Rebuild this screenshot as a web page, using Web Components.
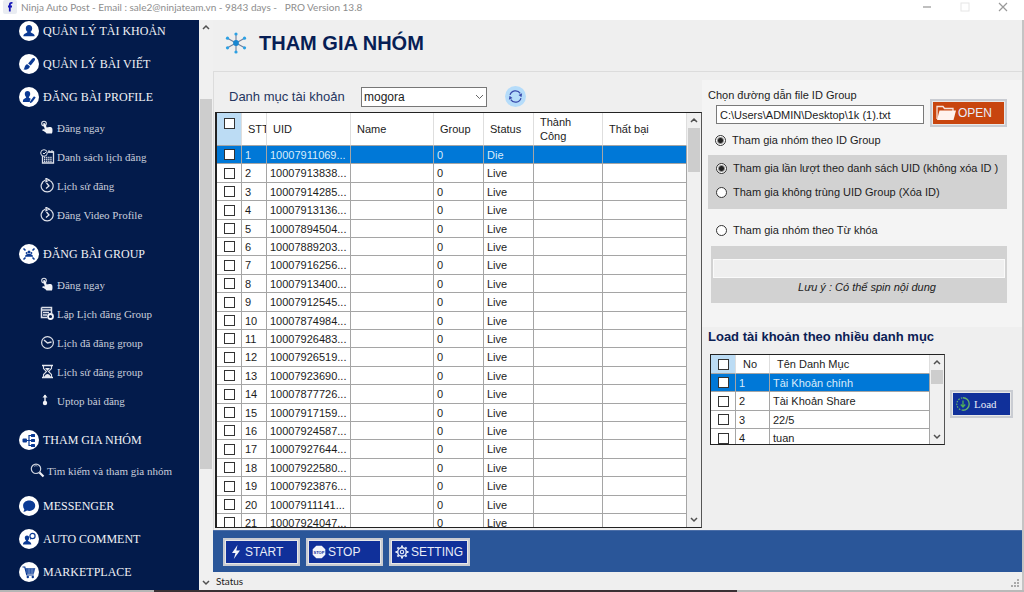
<!DOCTYPE html>
<html lang="vi">
<head>
<meta charset="utf-8">
<title>Ninja Auto Post</title>
<style>
html,body{height:100%;margin:0}
body{font:11px/14px "Liberation Sans",Arial,sans-serif;color:#1c1c1c;background:#efefef;overflow:hidden}
</style>
</head>
<body>
<ninja-app></ninja-app>
<script>
const ICONS = {
user:'<circle cx="10" cy="10" r="10" fill="#fff"/><path d="M10 4c-2 0-3.300 1.400-3.200 3.400.1 1.500.7 2.700 1.600 3.400-.1 1-1.200 1.300-2.600 1.900-1 .4-1.400 1.200-1.400 2.500h11.200c0-1.300-.4-2.100-1.400-2.500-1.400-.6-2.500-.9-2.600-1.900.9-.7 1.500-1.900 1.600-3.400C13.300 5.400 12 4 10 4z" fill="#0b3a94"/>',
brush:'<circle cx="10" cy="10" r="10" fill="#fff"/><path d="M15.500 4.200c.9.600.6 1.700 0 2.500l-3.800 4.800-2.600-2.100 4-4.600c.7-.8 1.600-1.200 2.400-.6z M8.300 10.200l2.600 2.100c-.4 2.600-3 3.900-6.400 3.300 1.500-1.200.7-4.800 3.800-5.400z" fill="#0b3a94"/>',
edit:'<circle cx="10" cy="10" r="10" fill="#fff"/><path d="M8.500 4C6.800 4 5.700 5.200 5.800 7c.1 1.400.6 2.400 1.400 3-.1 1-1 1.300-2 1.700-.9.400-1.300 1.200-1.300 3.300h7c-.3-1.300.2-2.400 1-3.300-1-.4-2-.7-2.100-1.700.8-.6 1.300-1.600 1.400-3C11.300 5.200 10.200 4 8.500 4z" fill="#0b3a94"/><path d="M15 9.200l1.700 1.300-3.600 4.800-2.300.9.500-2.300z" fill="#0b3a94"/>',
people:'<circle cx="10" cy="10" r="10" fill="#fff"/><g fill="#0b3a94"><circle cx="10" cy="8" r="1.500"/><circle cx="7.600" cy="9" r="1"/><circle cx="12.400" cy="9" r="1"/><path d="M6 12.800c0-2.600 2.500-2.800 4-2.800s4 .2 4 2.800z"/></g><path d="M4.500 4.500l2 2M15.500 4.500l-2 2M4.500 15.500l2-2M15.500 15.500l-2-2" stroke="#0b3a94" stroke-width="1.600"/>',
tree:'<circle cx="10" cy="10" r="10" fill="#fff"/><path d="M6 10.500h4m3-5h-3v10h3M10 10.500h3" stroke="#0b3a94" stroke-width="1.200" fill="none"/><g fill="#0b3a94"><rect x="3.500" y="8.500" width="4.500" height="4" rx="1"/><rect x="12" y="4" width="4" height="3" rx=".5"/><rect x="12" y="9" width="4" height="3" rx=".5"/><rect x="12" y="14" width="4" height="3" rx=".5"/></g>',
chat:'<circle cx="10" cy="10" r="10" fill="#fff"/><path d="M10.200 4.500c3.500 0 6 2.200 6 5.200s-2.500 5.200-6 5.200c-.8 0-1.500-.1-2.200-.3-1 1-2.500 1.300-3.800 1 .8-.7 1.200-1.500 1.100-2.400-.8-.9-1.200-2.100-1.200-3.500 0-3 2.600-5.200 6.100-5.200z" fill="#0b3a94"/>',
comment:'<circle cx="10" cy="10" r="10" fill="#fff"/><path d="M8 6.500c1.500 0 2.300 1.100 2.200 2.500-.1 1-.5 1.900-1.200 2.400.2 1.400 3.300.8 3.300 4.100H4c0-3.300 2.800-2.700 3-4.100-.7-.5-1.100-1.400-1.200-2.400C5.700 7.600 6.500 6.500 8 6.500z" fill="#0b3a94"/><circle cx="13.500" cy="7" r="2.600" fill="#fff" stroke="#0b3a94" stroke-width="1.200"/><path d="M11.700 8.700l-.9 2.100 2.300-1" fill="#0b3a94"/>',
cart:'<circle cx="10" cy="10" r="10" fill="#fff"/><path d="M3.500 5h2.300l2 8h7" fill="none" stroke="#0b3a94" stroke-width="1.200"/><path d="M6.300 6.300h10l-1.500 5.400H7.700z" fill="#0b3a94"/><path d="M7 8h9M7.500 10h8M10 6.500v5M13 6.500v5" stroke="#a9c0ea" stroke-width=".5"/><circle cx="8.800" cy="15" r="1.200" fill="#0b3a94"/><circle cx="13.800" cy="15" r="1.200" fill="#0b3a94"/>',
tap:'<circle cx="4" cy="3.600" r="2.300" fill="none" stroke="#dcdfe8" stroke-width="1.100"/><path d="M3.400 3.300c.8-.5 1.600 0 1.900.8l1.400 3.500c1.600-.7 5-1 5.600.8.300 1.800.3 3.500-.4 5.100H6.500c-.9-1.700-2.400-2.200-4.300-3 .1-1.300 1.700-1.300 2.700-.9L3.200 4.600z" fill="#f2f3f7"/>',
calendar:'<path d="M2.500 6v8h11V3H8" fill="none" stroke="#dcdfe8" stroke-width="1.300"/><circle cx="4" cy="4" r="3.300" fill="#031b4b" stroke="#dcdfe8"/><path d="M3 4l1 1 2-2M9 1v3M12 1v3M9 3h5" stroke="#dcdfe8" fill="none"/><path d="M4 8.500h8M4 10.500h8M4 12.500h8" stroke="#dcdfe8" stroke-width="1.300" stroke-dasharray="1.300 .8"/>',
history:'<path d="M5 2.300A6 6 0 1 0 9 2.200M5 2.300A6 6 0 0 0 1.800 6" fill="none" stroke="#dcdfe8" stroke-width="1.200"/><path d="M6 .300l3 1.700-3 1.700zM6.500 5L9 8l-3 2.500" fill="none" stroke="#e5e7ee" stroke-width="1.300"/>',
plan:'<path d="M1.500 1.500h10v6M1.500 1.500v10H7M1.500 4h10M3 6.500h6M3 9h4" fill="none" stroke="#dcdfe8" stroke-width="1.500"/><circle cx="10.500" cy="10.500" r="2.500" fill="none" stroke="#f2f3f7" stroke-width="1.800"/>',
clock:'<circle cx="7.500" cy="7.500" r="5.900" fill="none" stroke="#dcdfe8" stroke-width="1.200"/><path d="M4 5l3.500 3 4-1" fill="none" stroke="#dcdfe8" stroke-width="1.500"/>',
glass:'<path d="M2 1.500h11M2 13.500h11" stroke="#e5e7ee" stroke-width="1.600"/><path d="M3.500 2v2.500l3 3-3 3V13h8v-2.500l-3-3 3-3V2" fill="none" stroke="#dcdfe8" stroke-width="1.100"/><path d="M5 4h5L7.500 7zM4.500 13c0-2 2-3 3-3s3 1 3 3z" fill="#e5e7ee"/>',
up:'<path d="M5 2v8" stroke="#f2f3f7" stroke-width="1.400"/><path d="M2.500 4.500L5 1.500l2.500 3z" fill="#f2f3f7"/><circle cx="5" cy="10" r="2.200" fill="#f2f3f7"/>',
search:'<circle cx="6" cy="5.800" r="4.700" fill="none" stroke="#cfd4df" stroke-width="1.200"/><path d="M4 3.500c1-1 2.500-1 3.500-.4" fill="none" stroke="#cfd4df" stroke-width=".7"/><path d="M9.500 9.500l4 4" stroke="#f2f3f7" stroke-width="2.200"/>',
hub:'<path d="M11 1v20M2 6l18 10M2 16L20 6" stroke="#6d7f9c" stroke-width="1.100"/><circle cx="11" cy="11" r="2.900" fill="#1a86d0"/><g fill="#2aa0e4"><circle cx="11" cy="2" r="1.600"/><circle cx="11" cy="20" r="1.600"/><circle cx="2.500" cy="6.200" r="1.600"/><circle cx="19.500" cy="6.200" r="1.600"/><circle cx="2.500" cy="15.800" r="1.600"/><circle cx="19.500" cy="15.800" r="1.600"/></g>',
refresh:'<circle cx="10" cy="10" r="10" fill="#b5dcfa"/><path d="M4.800 8.500A5.400 5.400 0 0 1 14.500 7M15.200 11.500A5.400 5.400 0 0 1 5.500 13" fill="none" stroke="#3949ab" stroke-width="1.200"/><path d="M16.300 7l-.6 3.600-2.800-2.100zM3.700 13l.6-3.600 2.800 2.100z" fill="#3949ab"/>',
bolt:'<path d="M8.500 0L3 8h3.500L4.800 14 11 5.500H7.300z" fill="#f4f5fb"/>',
stop:'<path d="M4.300.7h5.400l3.600 3.600v5.400l-3.600 3.600H4.300L.7 9.700V4.300z" fill="#f4f5fb"/><text x="7" y="8.600" font-family="Liberation Sans" font-weight="700" font-size="4" text-anchor="middle" fill="#10309a">STOP</text>',
gear:'<g stroke="#dfe6f6" fill="none"><circle cx="7" cy="7" r="4.300" stroke-width="1.500"/><circle cx="7" cy="7" r="1.700" stroke-width="1.100"/><path d="M7 .5v2M7 11.500v2M.5 7h2M11.500 7h2M2.400 2.400l1.400 1.400M10.200 10.200l1.400 1.400M2.400 11.600l1.400-1.400M10.200 3.800l1.400-1.400" stroke-width="2"/></g>',
folder:'<path d="M1 14V1.500h6l1.500 2H17V6" fill="none" stroke="#f7e4dc" stroke-width="1.300"/><path d="M3.500 5.500H20L17.500 15H1z" fill="#fff3ee"/>',
load:'<path d="M7 .8a6.200 6.200 0 0 1 0 12.400" fill="none" stroke="#64b06a" stroke-width="1.400"/><path d="M7 13.200A6.200 6.200 0 0 1 7 .8" fill="none" stroke="#64b06a" stroke-width="1.200" stroke-dasharray="1.500 1.300"/><path d="M7 3.500v6M4.800 7.500L7 10l2.200-2.500" fill="none" stroke="#4fae58" stroke-width="1.300"/>',
logo:'<rect width="14" height="14" rx="2" fill="#e9ecf2"/><path d="M9.500 3c-2-.5-2.700.5-2.700 2v6.500M5 6.500h4" fill="none" stroke="#1717b8" stroke-width="1.800"/>'
};
const icon = (name,w,h,vb) => `<svg width="${w}" height="${h}" viewBox="${vb||'0 0 '+w+' '+h}" aria-hidden="true">${ICONS[name]}</svg>`;
const define = (tag, css, render) => customElements.define(tag, class extends HTMLElement {
  constructor(){ super(); this.attachShadow({mode:'open'}); }
  connectedCallback(){
    this.shadowRoot.innerHTML = `<style>*{box-sizing:border-box}svg{display:block;flex:none}${css}</style>${render(this)}`;
  }
});

define('title-bar', `
:host{display:flex;height:20px;background:#fff;align-items:flex-start;padding-left:3px;color:#8d8d8d;font:10px/14px Lato,sans-serif}
.name{margin-left:4px;white-space:pre;flex:1}
.controls{display:flex;gap:28px;padding:2px 16px 0 0}
button{all:unset;width:10px;height:10px}`,
() => `${icon('logo',14,14)}<span class="name">Ninja Auto Post - Email : sale2@ninjateam.vn - 9843 days -   PRO Version 13.8</span>
<div class="controls"><button aria-label="Minimize"><svg width="10" height="10"><path d="M1 5h8" stroke="#aaa" stroke-width="1.500"/></svg></button>
<button aria-label="Maximize"><svg width="10" height="10"><rect x="1" y="1" width="8" height="8" fill="none" stroke="#e6e6e6"/></svg></button>
<button aria-label="Close"><svg width="10" height="10"><path d="M1 1l8 8M9 1l-8 8" stroke="#999" stroke-width="1.200"/></svg></button></div>`);

define('nav-section', `
:host{display:block;color:#fff}
a{display:flex;align-items:center;gap:4px;height:33px;padding:0 0 0 19px;color:#f1f2f6;text-decoration:none;white-space:nowrap;font:12px/16px "Liberation Serif",serif}`,
el => `<a href="#">${icon(el.getAttribute('icon'),20,20)}<span>${el.getAttribute('label')}</span></a><slot></slot>`);

define('nav-item', `
:host{display:block;padding-left:40px}
:host([wide]){padding-left:30px}
a{display:flex;align-items:center;gap:2px;height:29px;color:#c9cedb;text-decoration:none;white-space:nowrap;font:11px/14px "Liberation Serif",serif}`,
el => `<a href="#">${icon(el.getAttribute('icon'),15,15)}<span><slot></slot></span></a>`);

define('side-nav', `
:host{display:flex;flex-direction:column;flex:0 0 199px;background:#031b4b;overflow:hidden}
nav{margin-top:-6px;display:flex;flex-direction:column}
.group{margin-top:8px}.after{margin-top:4px}`,
() => `<nav>
<nav-section icon="user" label="QUẢN LÝ TÀI KHOẢN"></nav-section>
<nav-section icon="brush" label="QUẢN LÝ BÀI VIẾT"></nav-section>
<nav-section icon="edit" label="ĐĂNG BÀI PROFILE">
<nav-item icon="tap">Đăng ngay</nav-item><nav-item icon="calendar">Danh sách lịch đăng</nav-item><nav-item icon="history">Lịch sử đăng</nav-item><nav-item icon="history">Đăng Video Profile</nav-item></nav-section>
<nav-section class="group" icon="people" label="ĐĂNG BÀI GROUP">
<nav-item icon="tap">Đăng ngay</nav-item><nav-item icon="plan">Lập Lịch đăng Group</nav-item><nav-item icon="clock">Lịch đã đăng group</nav-item><nav-item icon="glass">Lịch sử đăng group</nav-item><nav-item icon="up">Uptop bài đăng</nav-item></nav-section>
<nav-section class="group" icon="tree" label="THAM GIA NHÓM"><nav-item wide icon="search">Tìm kiếm và tham gia nhóm</nav-item></nav-section>
<nav-section class="after" icon="chat" label="MESSENGER"></nav-section>
<nav-section icon="comment" label="AUTO COMMENT"></nav-section>
<nav-section icon="cart" label="MARKETPLACE"></nav-section></nav>`);

define('scroll-bar', `
:host{display:flex;flex-direction:column;flex:0 0 14px;background:#f0f0f0;align-items:center}
.track{flex:1;width:12px;display:flex;flex-direction:column}
.thumb{background:#cdcdcd}
svg{margin:4px 0}`,
el => `<svg width="8" height="7"><path d="M1 5l3-3 3 3" fill="none" stroke="#505050" stroke-width="1.500"/></svg>
<div class="track"><div style="flex:${el.getAttribute('before')}"></div><div class="thumb" style="flex:${el.getAttribute('size')}"></div><div style="flex:${el.getAttribute('after')}"></div></div>
<svg width="8" height="7"><path d="M1 2l3 3 3-3" fill="none" stroke="#505050" stroke-width="1.500"/></svg>`);

const GRID = `
:host{display:flex;border:1px solid #222;border-right-color:#555;background:#fff;overflow:hidden;min-height:0}
.view{flex:1;min-width:0;overflow:hidden}
table{width:100%;border-collapse:separate;border-spacing:0;table-layout:fixed}
th,td{padding:0 0 0 3px;overflow:hidden;white-space:nowrap;text-align:left;font-weight:400;border-right:1px solid #a5a5a5;border-bottom:1px solid #a5a5a5}
th{border-right-color:#dedede}
td{height:18px;line-height:16px}
tr:nth-child(5n+2) td,tr:nth-child(5n+4) td{height:19px}
th:first-child{background:#bcdcf4}
th:first-child,td:first-child{padding:0;text-align:center}
.on td{background:#0078d7;color:#d9ecfb}
input{appearance:none;display:block;width:11px;height:11px;margin:0 auto;border:1px solid #333;background:#fff}`;
const box = label => `<input type="checkbox" aria-label="${label}">`;

define('account-grid', GRID + `
:host{flex:1;border-left-width:2px}
th{height:33px;padding-left:6px}
th:first-child{vertical-align:top;padding:5px 0 0}`,
() => { const ids = '10007911069 10007913838 10007914285 10007913136 10007894504 10007889203 10007916256 10007913400 10007912545 10007874984 10007926483 10007926519 10007923690 10007877726 10007917159 10007924587 10007927644 10007922580 10007923876 10007911141 10007924047'.split(' ');
return `<div class="view"><table><colgroup><col style="width:25px"><col style="width:25px"><col style="width:84px"><col style="width:83px"><col style="width:50px"><col style="width:50px"><col style="width:69px"><col></colgroup>
<thead><tr><th>${box('Chọn tất cả')}</th><th>STT</th><th>UID</th><th>Name</th><th>Group</th><th>Status</th><th>Thành<br>Công</th><th>Thất bại</th></tr></thead><tbody>${ids.map((u,i)=>`<tr${i?'':' class="on"'}><td>${box('Chọn '+(i+1))}</td><td>${i+1}</td><td>${u}...</td><td></td><td>0</td><td>${i?'Live':'Die'}</td><td></td><td></td></tr>`).join('')}</tbody></table></div><scroll-bar before="0" size="44" after="340"></scroll-bar>`; });

define('category-grid', GRID + `
:host{flex:0 0 235px;height:91px}
th{height:19px;padding-left:7px}`,
() => `<div class="view"><table><colgroup><col style="width:25px"><col style="width:34px"><col></colgroup>
<thead><tr><th>${box('Chọn tất cả')}</th><th>No</th><th>Tên Danh Mục</th></tr></thead><tbody>${['Tài Khoản chính','Tài Khoản Share','22/5','tuan'].map((n,i)=>`<tr${i?'':' class="on"'}><td>${box('Chọn '+n)}</td><td>${i+1}</td><td>${n}</td></tr>`).join('')}</tbody></table></div><scroll-bar before="0" size="14" after="46"></scroll-bar>`);

define('push-button', `
:host{display:block;height:28px;width:77px}
:host([kind=setting]){width:81px}
:host([kind=load]){width:63px}
button{display:flex;align-items:center;gap:2px;width:100%;height:100%;padding:0 4px;margin:0;border:2px solid #c9ccd2;outline:1px solid #e8e8e8;outline-offset:-3px;border-radius:0;background:#10309a;color:#e8ecf8;font:12px/16px "Liberation Sans",sans-serif;white-space:nowrap}
:host([kind=open]) button{background:#c8450e}
:host([kind=load]) button{font:11px/14px "Liberation Serif",serif;gap:4px}`,
el => { const k = el.getAttribute('icon'); return `<button type="button">${k==='folder'?icon(k,20,16):icon(k,14,14)}<span><slot></slot></span></button>`; });

define('radio-choice', `
:host{display:block}
label{display:flex;align-items:center;gap:6px;height:16px;white-space:nowrap}
input{appearance:none;margin:0;width:11px;height:11px;border:1px solid #333;border-radius:50%;background:#fff}
input:checked{background:radial-gradient(circle,#222 0 2px,#fff 4px)}`,
el => `<label><input type="radio" ${el.hasAttribute('checked')?'checked':''}><span><slot></slot></span></label>`);

define('join-options', `
:host{display:block;background:#f4f4f4;height:247px;padding:8px 15px 0 6px}
.path{display:flex;align-items:center;gap:6px;padding-left:8px;height:28px}
.title{display:block;height:14px;margin-bottom:-3px}
#file{flex:1;min-width:0;height:19px;margin:3px 0 0;padding:0 3px;border:1px solid #7a7a7a;background:#fff;font:inherit;color:inherit}
.main{padding:5px 0 7px 7px}
.box{background:#d2d2d2}
.order{padding:5px 0 9px 8px;display:grid;gap:8px}
.keyword{padding:13px 0 8px 8px}
.spin{margin-left:3px;height:57px;padding:13px 2px 0;text-align:center;font-style:italic;line-height:18px}
.spin input{display:block;width:100%;height:19px;border:1px solid #fafafa;background:#efefef;margin:0}
.spin span{display:block;padding-left:16px}`,
() => `<label class="title" for="file">Chọn đường dẫn file ID Group</label>
<div class="path"><input id="file" value="C:\\Users\\ADMIN\\Desktop\\1k (1).txt"><push-button kind="open" icon="folder">OPEN</push-button></div>
<radio-choice class="main" checked>Tham gia nhóm theo ID Group</radio-choice>
<div class="box order"><radio-choice checked>Tham gia lần lượt theo danh sách UID (không xóa ID )</radio-choice><radio-choice>Tham gia không trùng UID Group (Xóa ID)</radio-choice></div>
<radio-choice class="keyword">Tham gia nhóm theo Từ khóa</radio-choice>
<div class="box spin"><input aria-label="Từ khóa"><span>Lưu ý : Có thể spin nội dung</span></div>`);

define('join-page', `
:host{display:flex;flex-direction:column;flex:1;min-width:0}
header{display:flex;align-items:center;gap:12px;height:51px;padding:0 0 6px 12px}
h1{margin:0;font:bold 20px/24px "Liberation Sans",sans-serif;color:#071e55}
.panel{flex:1;min-height:0;display:grid;grid-template-columns:minmax(0,1fr) 320px;border:1px solid #dcdcdc;border-width:1px 0 0 1px;padding-bottom:2px}
.left{display:flex;flex-direction:column;min-height:0;padding-left:1px}
.filter{display:flex;align-items:center;height:40px;padding:9px 0 0 14px;flex:none}
.filter label{width:132px;font-size:13px;color:#26365f;line-height:16px;white-space:nowrap}
.pick{position:relative;width:126px;height:20px;margin-right:18px}
select{appearance:none;width:100%;height:100%;border:1px solid #777;border-radius:0;background:#fff;padding:0 2px;font:12px/16px "Liberation Sans",sans-serif;color:#1c1c1c}
.pick svg{position:absolute;right:3px;top:7px;pointer-events:none}
.refresh{all:unset}
.right{padding-top:8px}
h2{margin:0;padding:1px 6px 0;font:bold 13px/18px "Liberation Sans",sans-serif;color:#0b2054;white-space:nowrap}
.load{display:flex;align-items:center;gap:5px;padding:8px 0 0 8px}
footer{display:flex;gap:6px;align-items:center;height:42px;padding-left:10px;background:#2a5699;border-top:1px solid #4b6ea8}
.load push-button{margin-top:8px}
.status{display:flex;justify-content:space-between;align-items:flex-end;height:18px;padding:0 3px 2px 3px;font:10px/14px Lato,sans-serif}`,
() => `<header>${icon('hub',22,22)}<h1>THAM GIA NHÓM</h1></header>
<div class="panel"><div class="left"><div class="filter"><label for="cat">Danh mục tài khoản</label><div class="pick"><select id="cat"><option>mogora</option></select><svg width="9" height="6"><path d="M1 1l3.500 3.500L8 1" fill="none" stroke="#666"/></svg></div><button class="refresh" aria-label="Làm mới">${icon('refresh',21,21,'0 0 20 20')}</button></div><account-grid></account-grid></div>
<div class="right"><join-options></join-options><h2>Load tài khoản theo nhiều danh mục</h2><div class="load"><category-grid></category-grid><push-button kind="load" icon="load">Load</push-button></div></div></div>
<footer><push-button icon="bolt">START</push-button><push-button icon="stop">STOP</push-button><push-button kind="setting" icon="gear">SETTING</push-button></footer>
<div class="status"><span>Status</span><svg width="9" height="9" fill="#aaa"><path d="M7 0h2v2H7zM7 3h2v2H7zM7 6h2v2H7zM4 3h2v2H4zM4 6h2v2H4zM1 6h2v2H1z"/></svg></div>`);

define('ninja-app', `
:host{display:flex;flex-direction:column;height:100vh}
main{flex:1;min-height:0;display:flex;border-right:2px solid #c4c4c4}
.edge{height:2px;background:linear-gradient(90deg,#b5b5b5 15%,#3a3034 15% 72%,#b9b9b9 72%)}`,
() => `<title-bar></title-bar><main><side-nav></side-nav><scroll-bar before="64" size="370" after="106"></scroll-bar><join-page></join-page></main><div class="edge"></div>`);
</script>
</body>
</html>
